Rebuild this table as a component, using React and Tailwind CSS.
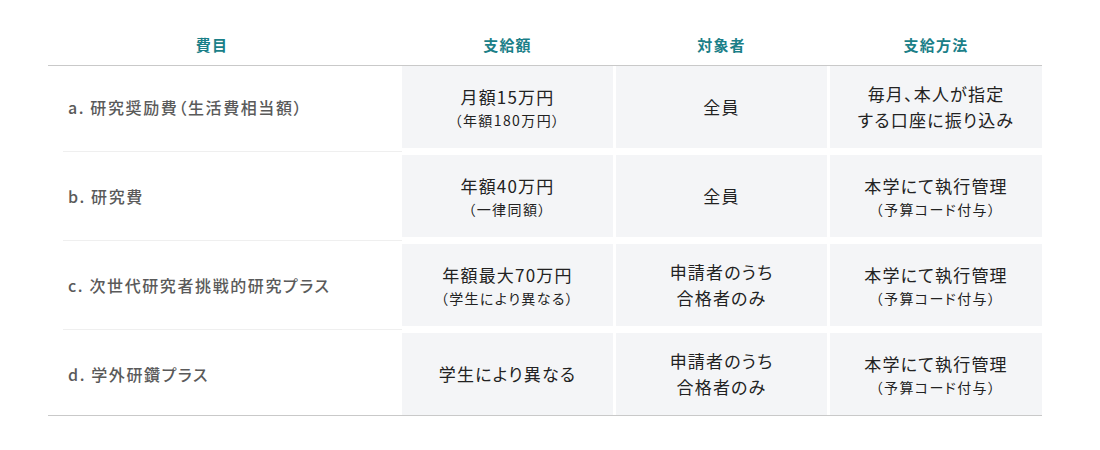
const rows = [
  {
    label: "a. 研究奨励費（生活費相当額）",
    amount: ["月額15万円", "（年額180万円）"],
    target: ["全員"],
    method: { main: ["毎月、本人が指定", "する口座に振り込み"] },
  },
  {
    label: "b. 研究費",
    amount: ["年額40万円", "（一律同額）"],
    target: ["全員"],
    method: { main: ["本学にて執行管理"], sub: "（予算コード付与）" },
  },
  {
    label: "c. 次世代研究者挑戦的研究プラス",
    amount: ["年額最大70万円", "（学生により異なる）"],
    target: ["申請者のうち", "合格者のみ"],
    method: { main: ["本学にて執行管理"], sub: "（予算コード付与）" },
  },
  {
    label: "d. 学外研鑽プラス",
    amount: ["学生により異なる"],
    target: ["申請者のうち", "合格者のみ"],
    method: { main: ["本学にて執行管理"], sub: "（予算コード付与）" },
  },
];

const font = { fontFamily: '"Noto Sans CJK JP", "Noto Sans", sans-serif' };

function Cell({ children, w }) {
  return (
    <div className={`${w} h-full bg-[#f4f5f7] flex flex-col items-center justify-center text-center text-[#222] text-[17px] tracking-[0.07em] leading-[26px]`}>
      {children}
    </div>
  );
}

export default function App() {
  return (
    <div className="w-[1100px] h-[450px] bg-white pt-[26px] pl-[48px] [font-feature-settings:'palt']" style={font}>
      <div className="w-[994px]">
        <div className="flex h-[40px] items-center border-b border-[#c9c9c9] text-[15px] tracking-[0.08em] font-bold text-[#1b7f88]">
          <div className="w-[354px] text-center pr-[26px]">費目</div>
          <div className="w-[211px] text-center">支給額</div>
          <div className="w-[3px]" />
          <div className="w-[211px] text-center">対象者</div>
          <div className="w-[3px]" />
          <div className="w-[212px] text-center">支給方法</div>
        </div>
        {rows.map((r, i) => (
          <div key={i}>
            {i > 0 && (
              <div className="h-[7px] flex items-center">
                <div className="ml-[15px] w-[339px] h-px bg-[#efefef]" />
              </div>
            )}
            <div className="flex h-[82px] gap-[3px]">
              <div className="w-[351px] flex items-center pl-[20px] text-base tracking-[0.1em] font-medium text-[#5a5a5a]">
                {r.label}
              </div>
              <Cell w="w-[211px]">
                <div>{r.amount[0]}</div>
                {r.amount[1] && <div className="text-sm tracking-[0.1em]">{r.amount[1]}</div>}
              </Cell>
              <Cell w="w-[211px]">
                {r.target.map((t, j) => (
                  <div key={j}>{t}</div>
                ))}
              </Cell>
              <Cell w="w-[212px]">
                {r.method.main.map((t, j) => (
                  <div key={j}>{t}</div>
                ))}
                {r.method.sub && <div className="text-sm tracking-[0.1em]">{r.method.sub}</div>}
              </Cell>
            </div>
          </div>
        ))}
        <div className="border-t border-[#c9c9c9]" />
      </div>
    </div>
  );
}
